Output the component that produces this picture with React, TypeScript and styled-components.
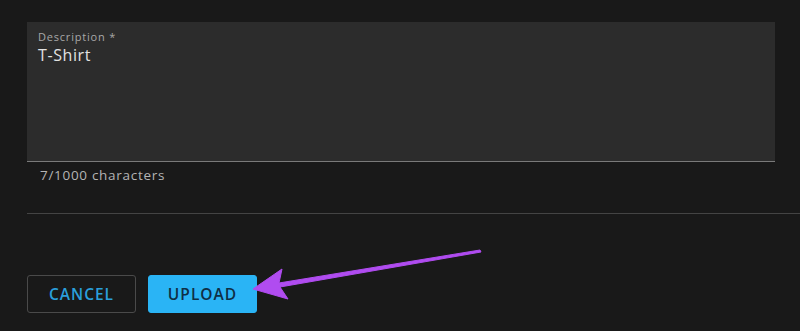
import React from "react";
import styled, { createGlobalStyle } from "styled-components";

const Global = createGlobalStyle`
  html, body { margin: 0; padding: 0; background: #191919; }
  body { font-family: "Open Sans", "Noto Sans", sans-serif; }
`;

const Page = styled.div`
  position: relative;
  width: 800px;
  height: 331px;
  overflow: hidden;
  background: #191919;
  padding: 22px 0 0 27px;
  box-sizing: border-box;
  display: flex;
  flex-direction: column;
`;

const Field = styled.div`
  width: 748px;
  height: 140px;
  box-sizing: border-box;
  background: #2c2c2c;
  border-bottom: 1px solid #7a7a7a;
  padding: 8px 11px;
  display: flex;
  flex-direction: column;
`;

const Label = styled.label`
  font-size: 11px;
  line-height: 14px;
  color: #a8a8a8;
  letter-spacing: 0.8px;
`;

const Value = styled.div`
  margin-top: 1px;
  font-size: 16px;
  line-height: 20px;
  color: #e2e2e2;
  letter-spacing: 0.6px;
`;

const Helper = styled.div`
  padding: 4px 0 0 13px;
  font-size: 13.5px;
  line-height: 18px;
  color: #b4b4b4;
  letter-spacing: 0.7px;
`;

const Divider = styled.hr`
  margin: 29px 0 0 0;
  border: none;
  border-top: 1px solid #444;
  width: 773px;
`;

const Actions = styled.div`
  display: flex;
  gap: 12px;
  margin-top: 61px;
`;

const Button = styled.button<{ $primary?: boolean }>`
  width: 109px;
  height: 38px;
  box-sizing: border-box;
  border-radius: 3px;
  font-family: "Open Sans", "Noto Sans", sans-serif;
  font-weight: 600;
  font-size: 15.5px;
  letter-spacing: 1px;
  cursor: pointer;
  border: 1px solid ${(p) => (p.$primary ? "#2ab4f5" : "#4a4a4a")};
  background: ${(p) => (p.$primary ? "#2ab4f5" : "transparent")};
  color: ${(p) => (p.$primary ? "#0f2f45" : "#2a9fdc")};
`;

const Arrow = styled.svg`
  position: absolute;
  left: 0;
  top: 0;
  pointer-events: none;
`;

export default function App() {
  return (
    <>
      <Global />
      <Page>
        <Field>
          <Label>Description *</Label>
          <Value>T-Shirt</Value>
        </Field>
        <Helper>7/1000 characters</Helper>
        <Divider />
        <Actions>
          <Button>CANCEL</Button>
          <Button $primary>UPLOAD</Button>
        </Actions>
        <Arrow width="800" height="331" viewBox="0 0 800 331">
          <polygon
            points="480,250 481,252 280,287 288,299 253,289 282,269 279,283"
            fill="#b04cf0"
            stroke="#b04cf0"
            strokeWidth="1"
            strokeLinejoin="round"
          />
        </Arrow>
      </Page>
    </>
  );
}
